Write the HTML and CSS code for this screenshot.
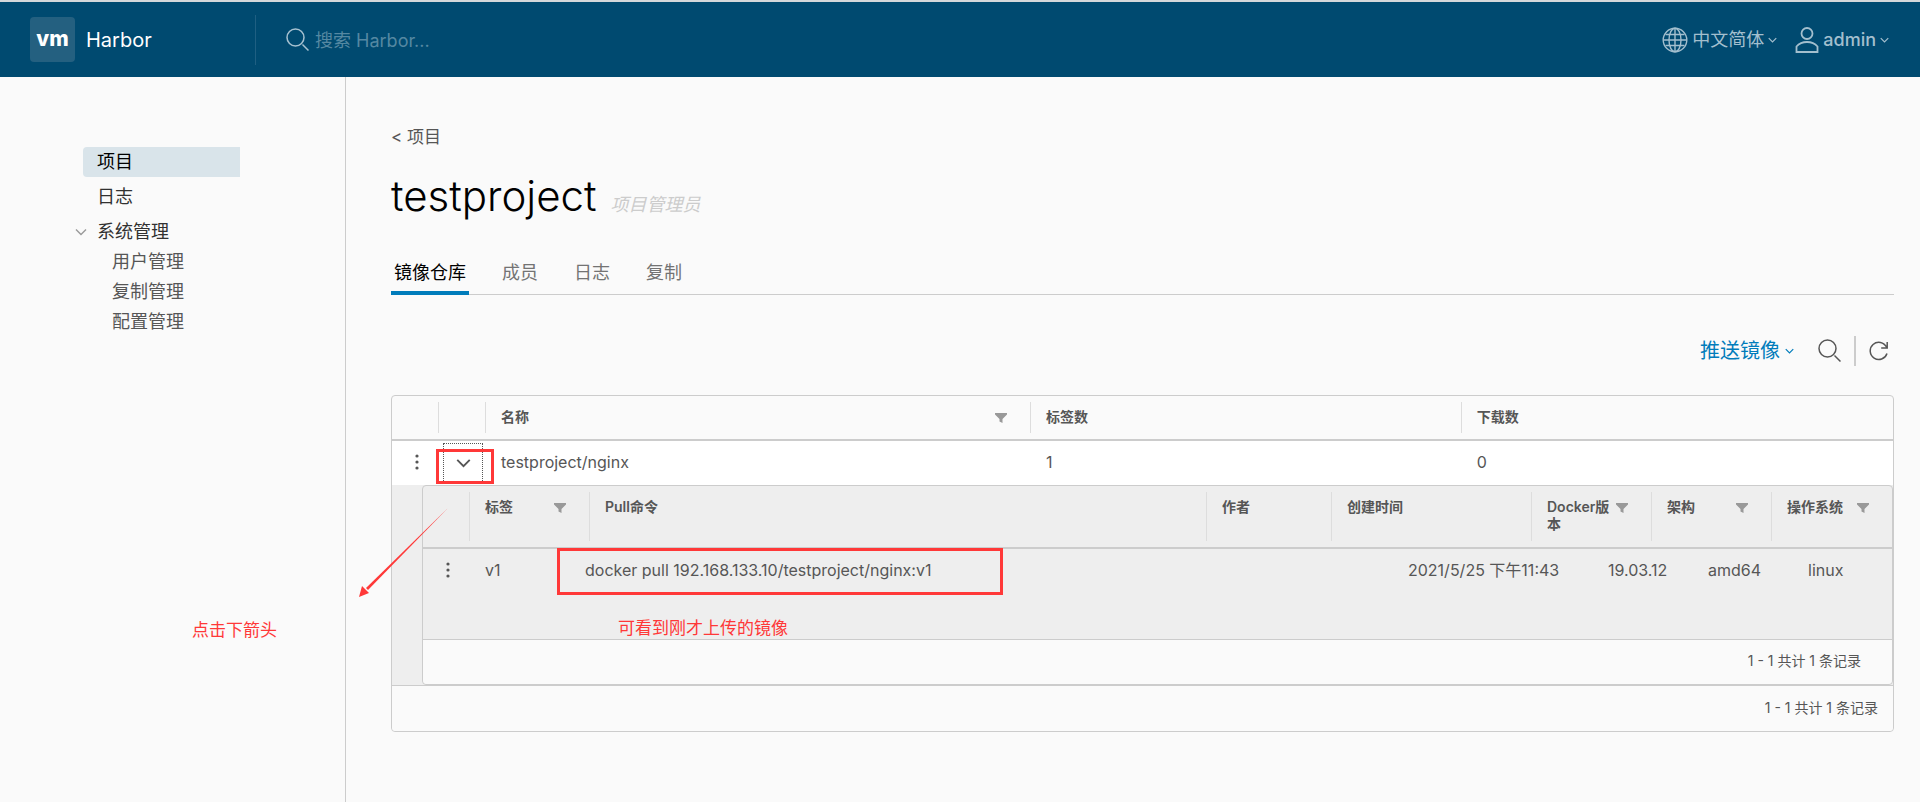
FILE: index.html
```html
<!DOCTYPE html>
<html lang="zh-CN">
<head>
<meta charset="utf-8">
<title>Harbor</title>
<link rel="stylesheet" href="styles.css">
</head>
<body>
<svg class="sprite" aria-hidden="true">
  <symbol id="search" viewBox="0 0 24 24"><circle cx="9.500" cy="9.500" r="8.500"/><path d="M16.500 16.500l6 6"/></symbol>
  <symbol id="chevron" viewBox="0 0 12 8"><path d="M1 1.500l5 5 5-5"/></symbol>
  <symbol id="filter" viewBox="0 0 12 10"><path d="M0 0h12v1.500L7.500 6v4L4.500 8.500V6L0 1.500z"/></symbol>
  <symbol id="dots" viewBox="0 0 4 16"><circle cx="2" cy="2" r="1.600"/><circle cx="2" cy="8" r="1.600"/><circle cx="2" cy="14" r="1.600"/></symbol>
</svg>
<header class="header">
  <a class="brand" href="#"><span class="logo">vm</span><span class="brand-name">Harbor</span></a>
  <label class="search">
    <svg class="icon-search"><use href="#search"/></svg>
    <input class="search-input" type="text" placeholder="搜索 Harbor..." aria-label="搜索">
  </label>
  <div class="header-actions">
    <button class="header-button" type="button">
      <svg class="icon-globe" viewBox="0 0 26 26"><circle cx="13" cy="13" r="11.800"/><ellipse cx="13" cy="13" rx="6" ry="11.800"/><path d="M13 1v24M3.500 7.500h19M1.500 13h23M3.500 18.500h19"/></svg>
      <span>中文简体</span><svg class="icon-caret"><use href="#chevron"/></svg>
    </button>
    <button class="header-button" type="button">
      <svg class="icon-user" viewBox="0 0 24 26"><circle cx="12" cy="6.500" r="5.500"/><path d="M1.500 25v-5.500c3-3.500 6-4.500 10.500-4.500s7.500 1 10.500 4.500V25z"/></svg>
      <span class="user-name">admin</span><svg class="icon-caret"><use href="#chevron"/></svg>
    </button>
  </div>
</header>
<div class="layout">
  <nav class="sidebar">
    <a class="nav-item nav-active" href="#">项目</a>
    <a class="nav-item" href="#">日志</a>
    <div class="nav-group">
      <button class="nav-toggle" type="button" aria-label="折叠"><svg class="icon-nav"><use href="#chevron"/></svg></button>
      <a class="nav-group-title" href="#">系统管理</a>
    </div>
    <div class="nav-children">
      <a class="nav-child" href="#">用户管理</a>
      <a class="nav-child" href="#">复制管理</a>
      <a class="nav-child" href="#">配置管理</a>
    </div>
  </nav>
  <main class="main">
    <a class="back" href="#">&lt; 项目</a>
    <div class="title-row"><h1 class="title">testproject</h1><em class="role">项目管理员</em></div>
    <div class="tabs" role="tablist">
      <button class="tab tab-active" type="button" role="tab">镜像仓库</button>
      <button class="tab" type="button" role="tab">成员</button>
      <button class="tab" type="button" role="tab">日志</button>
      <button class="tab" type="button" role="tab">复制</button>
    </div>
    <div class="toolbar">
      <button class="push" type="button">推送镜像<svg class="icon-caret"><use href="#chevron"/></svg></button>
      <button class="tool" type="button" aria-label="搜索"><svg class="icon-search"><use href="#search"/></svg></button>
      <span class="tool-divider"></span>
      <button class="tool" type="button" aria-label="刷新"><svg class="icon-refresh" viewBox="0 0 20 20"><path d="M18 12.500A8.600 8.600 0 1 1 17.500 6M18.200 1v6h-6"/></svg></button>
    </div>
    <div class="grid">
      <table class="repos">
        <colgroup><col class="col-menu"><col class="col-expand"><col><col class="col-tags"><col class="col-pulls"></colgroup>
        <thead>
          <tr>
            <th></th>
            <th><div class="head"></div></th>
            <th><div class="head"><span>名称</span><svg class="icon-filter"><use href="#filter"/></svg></div></th>
            <th><div class="head"><span>标签数</span></div></th>
            <th><div class="head"><span>下载数</span></div></th>
          </tr>
        </thead>
        <tbody>
          <tr class="repo-row">
            <td class="menu-cell"><button class="icon-button" type="button" aria-label="操作"><svg class="icon-dots"><use href="#dots"/></svg></button></td>
            <td class="expand-cell"><button class="expand" type="button" aria-label="展开"><svg class="icon-expand"><use href="#chevron"/></svg></button><span class="mark mark-expand"></span></td>
            <td>testproject/nginx</td>
            <td>1</td>
            <td>0</td>
          </tr>
          <tr>
            <td class="detail" colspan="5">
              <div class="subgrid">
                <table class="tags">
                  <thead>
                    <tr>
                      <th></th>
                      <th><div class="head"><span>标签</span><svg class="icon-filter"><use href="#filter"/></svg></div></th>
                      <th><div class="head"><span>Pull命令</span></div></th>
                      <th><div class="head"><span>作者</span></div></th>
                      <th><div class="head"><span>创建时间</span></div></th>
                      <th><div class="head"><span>Docker版本</span><svg class="icon-filter"><use href="#filter"/></svg></div></th>
                      <th><div class="head"><span>架构</span><svg class="icon-filter"><use href="#filter"/></svg></div></th>
                      <th><div class="head"><span>操作系统</span><svg class="icon-filter"><use href="#filter"/></svg></div></th>
                    </tr>
                  </thead>
                  <tbody>
                    <tr>
                      <td class="menu-cell"><button class="icon-button" type="button" aria-label="操作"><svg class="icon-dots"><use href="#dots"/></svg></button></td>
                      <td>v1</td>
                      <td class="pull-cell">docker pull 192.168.133.10/testproject/nginx:v1<span class="mark mark-pull"></span><span class="note note-pull">可看到刚才上传的镜像</span></td>
                      <td></td>
                      <td>2021/5/25 下午11:43</td>
                      <td>19.03.12</td>
                      <td>amd64</td>
                      <td>linux</td>
                    </tr>
                  </tbody>
                </table>
                <div class="footer subgrid-footer">1 - 1 共计 1 条记录</div>
              </div>
            </td>
          </tr>
        </tbody>
      </table>
      <div class="footer">1 - 1 共计 1 条记录</div>
    </div>
  </main>
  <svg class="arrow" viewBox="0 0 90 90"><path d="M89.500 .5L9 83l-2-2z"/><path d="M0 90L3 79l7 7z"/></svg>
  <span class="note note-arrow">点击下箭头</span>
</div>
</body>
</html>
```

FILE: styles.css
```css
* { box-sizing: border-box; }

body {
  margin: 0;
  min-height: 100vh;
  display: flex;
  flex-direction: column;
  background: #fafafa;
  color: #565656;
  font: 16px/24px Inter, "Noto Sans CJK SC", sans-serif;
}

a { color: inherit; text-decoration: none; }

button {
  padding: 0;
  border: 0;
  background: none;
  color: inherit;
  font: inherit;
  cursor: pointer;
}

svg { flex: none; fill: none; stroke: currentColor; }

.sprite { position: absolute; width: 0; height: 0; }

.icon-search { width: 24px; height: 24px; stroke-width: 1.5; }
.icon-globe { width: 26px; height: 26px; stroke-width: 1.4; }
.icon-user { width: 24px; height: 26px; stroke-width: 1.8; }
.icon-caret { width: 9px; height: 6px; stroke-width: 1.6; }
.icon-nav { width: 12px; height: 8px; stroke-width: 1.4; }
.icon-refresh { width: 20px; height: 20px; stroke-width: 1.5; }
.icon-expand { width: 15px; height: 10px; stroke-width: 1.5; }
.icon-filter { width: 12px; height: 10px; margin-top: 5px; fill: #999; stroke: none; }
.icon-dots { width: 4px; height: 16px; fill: #565656; stroke: none; }

/* header */
.header {
  display: flex;
  align-items: center;
  height: 77px;
  padding: 0 31px 0 30px;
  border-top: 2px solid #d4d8da;
  background: #004a70;
}

.brand {
  display: flex;
  align-items: center;
  gap: 11px;
  width: 225px;
  color: #fff;
  font-size: 20px;
}

.logo {
  width: 45px;
  height: 45px;
  border-radius: 4px;
  background: #246080;
  font-size: 21px;
  font-weight: 800;
  line-height: 43px;
  text-align: center;
}

.search {
  display: flex;
  flex: 1;
  align-items: center;
  gap: 5px;
  height: 50px;
  padding-left: 30px;
  border-left: 1px solid #1f5f82;
  color: #a6c1d0;
}

.search-input {
  flex: 1;
  padding: 2px 0 0;
  border: 0;
  outline: 0;
  background: none;
  color: #fff;
  font: inherit;
  font-size: 18px;
}

.search-input::placeholder { color: #5588a2; opacity: 1; }

.header-actions { display: flex; gap: 18px; color: #a3bfce; font-size: 18px; }
.header-button { display: flex; align-items: center; gap: 4px; }
.user-name { font-weight: 500; }

/* sidebar */
.layout { position: relative; display: flex; flex: 1; }

.sidebar {
  width: 346px;
  padding: 70px 105px 0 83px;
  border-right: 1px solid #ccc;
  color: #313131;
  font-size: 18px;
  line-height: 30px;
}

.nav-item { display: block; margin-bottom: 5px; padding-left: 14px; }

.nav-active {
  border-radius: 4px 0 0 4px;
  background: #d9e4ea;
  color: #000;
}

.nav-group { display: flex; gap: 10px; margin-left: -8px; }
.nav-toggle { display: flex; align-items: center; color: #999; }
.nav-child { display: block; padding-left: 29px; color: #565656; }

/* main */
.main { flex: 1; min-width: 0; padding: 48px 26px 20px 45px; }
.back { display: block; font-size: 17px; }

.title-row { display: flex; align-items: baseline; gap: 14px; height: 48px; margin-top: 24px; }
.title { margin: 0; color: #000; font-size: 42px; font-weight: 300; line-height: 46px; }
.role { color: #ccc; font-size: 18px; }

.tabs {
  display: flex;
  gap: 30px;
  margin-top: 33px;
  border-bottom: 1px solid #ccc;
  color: #737373;
  font-size: 18px;
}

.tab { height: 41px; margin-bottom: -1px; padding: 0 3px; border-bottom: 4px solid transparent; }
.tab-active { border-color: #007cbb; color: #000; }

.toolbar { display: flex; align-items: center; justify-content: flex-end; margin: 41px 5px 29px 0; height: 30px; }
.push { display: flex; align-items: center; gap: 5px; margin-right: 24px; color: #007cbb; font-size: 20px; }
.tool { display: flex; }
.tool-divider { width: 2px; height: 30px; margin: 0 13px 0 12px; background: #ccc; }

/* datagrid */
.grid { border: 1px solid #ccc; border-radius: 4px; }

table { width: 100%; border-collapse: separate; border-spacing: 0; table-layout: fixed; }
.col-menu { width: 46px; }
.col-expand { width: 47px; }
.col-tags { width: 28.7%; }
.col-pulls { width: 28.8%; }

th {
  padding: 6px 0;
  border-bottom: 2px solid #ccc;
  font-size: 14px;
  font-weight: 600;
  line-height: 17px;
  text-align: left;
  vertical-align: top;
}

.head {
  display: flex;
  justify-content: space-between;
  height: 100%;
  min-height: 31px;
  padding: 6px 23px 8px 15px;
  border-left: 1px solid #ddd;
}

td { padding: 9px 0 10px 16px; vertical-align: top; }
.repo-row { height: 44px; background: #fff; }
.menu-cell { padding-left: 23px; }
.icon-button { display: flex; align-items: center; height: 24px; }

.expand-cell { position: relative; padding: 2px 3px 0 5px; }
.expand { display: flex; align-items: center; justify-content: center; width: 40px; height: 40px; border: 1px dotted #565656; }

.detail { padding: 0 0 0 30px; background: #eee; }
.subgrid { border: 1px solid #ccc; border-radius: 4px; }
.tags { display: block; }
.tags thead, .tags tbody { display: block; }
.tags tr { display: grid; grid-template-columns: 46px 100px 1fr 100px 200px 100px 100px 100px; min-height: 90px; }
.tags thead tr { grid-template-columns: 46px 120px 1fr 125px 200px 120px 120px 121px; min-height: 63px; }
.tags .head { min-height: 49px; }

.footer {
  padding: 10px 15px 11px;
  border-top: 1px solid #ccc;
  border-radius: 0 0 4px 4px;
  background: #fafafa;
  font-size: 14px;
  text-align: right;
}

.subgrid-footer { padding: 9px 31px 11px; }

/* annotations */
.mark { position: absolute; border: 3px solid #ff3838; pointer-events: none; }
.mark-expand { left: -2px; top: 8px; width: 58px; height: 35px; }
.pull-cell { position: relative; }
.mark-pull { left: -12px; top: -1px; width: 446px; height: 47px; }
.note { position: absolute; color: #ff3838; font-size: 17px; white-space: nowrap; }
.note-pull { left: 49px; top: 67px; }
.note-arrow { left: 192px; top: 541px; }
.arrow { position: absolute; left: 359px; top: 430px; width: 90px; height: 90px; fill: #ff3838; stroke: none; }
```
